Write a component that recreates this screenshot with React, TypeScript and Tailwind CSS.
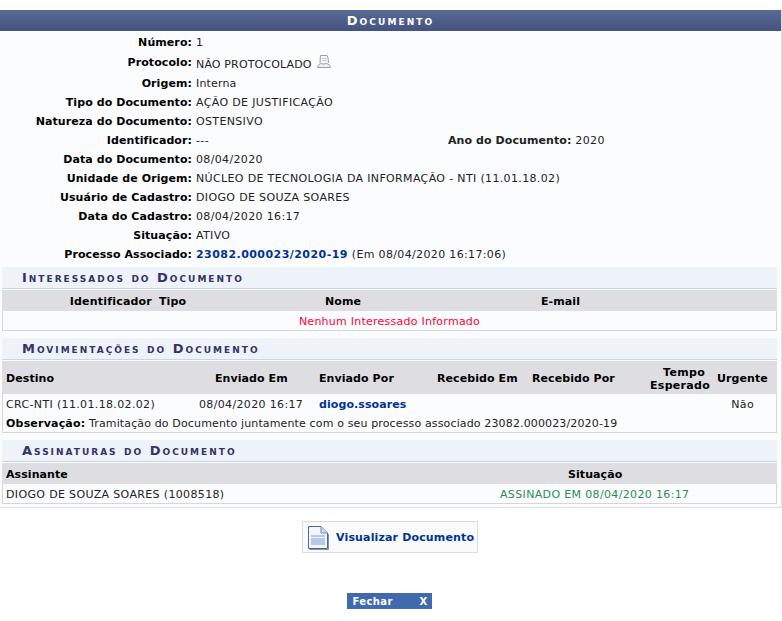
const labelRows: { label: string; value: React.ReactNode; h?: string }[] = [
  { label: 'Número:', value: '1', h: 'h-[20px]' },
  {
    label: 'Protocolo:',
    h: 'h-[21px]',
    value: (
      <span className="flex items-center gap-[5px]">
        <span className="mt-[3px] tracking-[0.15px]">NÃO PROTOCOLADO</span>
        <svg width="14" height="15" viewBox="0 0 14 15" fill="none" stroke="#a0a0a0" className="mt-[-3px]">
          <path d="M3 9 L3.5 1.5 H10 L11 4 L11.5 9" fill="#f6f6f6" />
          <path d="M5 4.5 H9.5 M5 6.5 H9.5" stroke="#c8c8c8" />
          <path d="M0.5 13.5 L1.5 11 Q3.5 8.5 6.5 10 Q10 8.5 12.5 11 L13.5 13.5 Z" fill="#f0f0f0" />
        </svg>
      </span>
    ),
  },
  { label: 'Origem:', value: <span className="tracking-[0.15px]">Interna</span>, h: 'h-[20px]' },
  { label: 'Tipo do Documento:', value: 'AÇÃO DE JUSTIFICAÇÃO' },
  { label: 'Natureza do Documento:', value: 'OSTENSIVO' },
  {
    label: 'Identificador:',
    value: (
      <span className="flex">
        <span className="w-[252px]">---</span>
        <b className="font-bold tracking-[0.08px]">Ano do Documento:</b>
        <span className="ml-[4px]">2020</span>
      </span>
    ),
  },
  { label: 'Data do Documento:', value: '08/04/2020' },
  { label: 'Unidade de Origem:', value: 'NÚCLEO DE TECNOLOGIA DA INFORMAÇÃO - NTI (11.01.18.02)' },
  { label: 'Usuário de Cadastro:', value: 'DIOGO DE SOUZA SOARES' },
  { label: 'Data do Cadastro:', value: '08/04/2020 16:17' },
  { label: 'Situação:', value: 'ATIVO' },
  {
    label: 'Processo Associado:',
    value: (
      <span>
        <b className="font-bold tracking-[0.45px] text-[#003390]">23082.000023/2020-19</b> (Em 08/04/2020 16:17:06)
      </span>
    ),
  },
];

function SectionTitle({ children }: { children: string }) {
  return (
    <div className="h-[22px] bg-[#eef2f9] border-b border-[#c8d4ec] pl-[20px] flex items-center text-[13px] font-bold tracking-[2px] text-[#333366] [font-variant:small-caps]">
      {children}
    </div>
  );
}

export default function App() {
  return (
    <div className="min-h-[621px] bg-white pt-[10px] text-[11px] leading-[13px] tracking-[0.35px] text-[#222222] font-['DejaVu_Sans',sans-serif]">
      <div className="w-[782px] border-b border-r border-[#dddddd] bg-[#fbfcfe] pb-[3px]">
        <div className="h-[21px] bg-[linear-gradient(#5a6a96,#43527f)] flex items-center justify-center text-[13px] font-bold tracking-[2.1px] text-white [font-variant:small-caps]">
          Documento
        </div>
        <div className="pt-[1px] pb-[3px]">
          {labelRows.map((r) => (
            <div key={r.label} className={`flex items-center ${r.h ?? 'h-[19px]'}`}>
              <div className="w-[192px] text-right font-bold tracking-[0.08px] text-black">{r.label}</div>
              <div className="ml-[4px]">{r.value}</div>
            </div>
          ))}
        </div>

        <div className="mx-[2px] w-[775px]">
          <SectionTitle>Interessados do Documento</SectionTitle>
          <div className="mt-[1px] h-[21px] pt-[2px] bg-[#dedee2] flex items-center font-bold tracking-[0.08px] text-black">
            <div className="w-[150px] text-right tracking-[0.2px]">Identificador</div>
            <div className="ml-[7px] w-[166px]">Tipo</div>
            <div className="w-[216px]">Nome</div>
            <div>E-mail</div>
          </div>
          <div className="h-[20px] pt-[2px] border-x border-b border-[#d4d6da] flex items-center justify-center tracking-[0.25px] text-[#ff0033]">
            Nenhum Interessado Informado
          </div>

          <div className="mt-[7px]">
            <SectionTitle>Movimentações do Documento</SectionTitle>
          </div>
          <div className="mt-[1px] h-[33px] pt-[2px] bg-[#dedee2] flex items-center font-bold tracking-[0.08px] text-black">
            <div className="w-[209px] pl-[4px]">Destino</div>
            <div className="w-[104px] pl-[4px]">Enviado Em</div>
            <div className="w-[118px] pl-[4px]">Enviado Por</div>
            <div className="w-[95px] pl-[4px]">Recebido Em</div>
            <div className="w-[122px] pl-[4px]">Recebido Por</div>
            <div className="w-[55px] text-right leading-[13px] tracking-[0.3px]">
              Tempo
              <br />
              Esperado
            </div>
            <div className="flex-1 pl-[12px]">Urgente</div>
          </div>
          <div className="border-x border-b border-[#d4d6da]">
            <div className="h-[20px] flex items-center">
              <div className="w-[196px] pl-[3px]">CRC-NTI (11.01.18.02.02)</div>
              <div className="w-[120px]">08/04/2020 16:17</div>
              <div className="font-bold tracking-[0.08px] text-[#003390]">diogo.ssoares</div>
              <div className="ml-auto mr-[22px]">Não</div>
            </div>
            <div className="h-[18px] flex items-center pl-[3px]">
              <span className="tracking-[0.14px]">
                <b className="font-bold tracking-[0.2px] text-black">Observação:</b> Tramitação do Documento juntamente com o seu processo associado 23082.000023/2020-19
              </span>
            </div>
          </div>

          <div className="mt-[7px]">
            <SectionTitle>Assinaturas do Documento</SectionTitle>
          </div>
          <div className="mt-[1px] h-[21px] pt-[2px] bg-[#dedee2] flex items-center font-bold tracking-[0.08px] text-black">
            <div className="w-[566px] pl-[4px]">Assinante</div>
            <div>Situação</div>
          </div>
          <div className="h-[20px] pt-[2px] border-x border-b border-[#d4d6da] flex items-center">
            <div className="w-[497px] pl-[3px]">DIOGO DE SOUZA SOARES (1008518)</div>
            <div className="text-[#2e8b57]">ASSINADO EM 08/04/2020 16:17</div>
          </div>
        </div>
      </div>

      <div className="mt-[13px] flex justify-center">
        <div className="ml-[-2px] h-[32px] w-[176px] border border-[#dddddd] bg-[#f9fafc] flex items-center pl-[4px] gap-[7px] font-bold tracking-[0.15px] text-[#003390]">
          <svg width="22" height="25" viewBox="0 0 22 25">
            <path d="M1.5 1.5 H14 L20.5 8 V23.5 H1.5 Z" fill="#f2f5fb" stroke="#52658c" />
            <path d="M14 1.5 V8 H20.5" fill="#cfdaee" stroke="#7a8cb0" />
            <rect x="4" y="10" width="14" height="10" fill="#b9c9e4" />
            <path d="M4 12.5 H18" stroke="#eef2f9" />
            <path d="M2.5 24.5 H21.5 V9" fill="none" stroke="#8a8f9c" />
          </svg>
          <span>Visualizar Documento</span>
        </div>
      </div>

      <div className="mt-[40px] flex justify-center">
        <div className="ml-[-4px] h-[16px] w-[85px] bg-[#4169ae] flex items-center justify-between pl-[6px] pr-[4px] text-[10px] font-bold tracking-[0.4px] text-white">
          <span>Fechar</span>
          <span>X</span>
        </div>
      </div>
    </div>
  );
}
